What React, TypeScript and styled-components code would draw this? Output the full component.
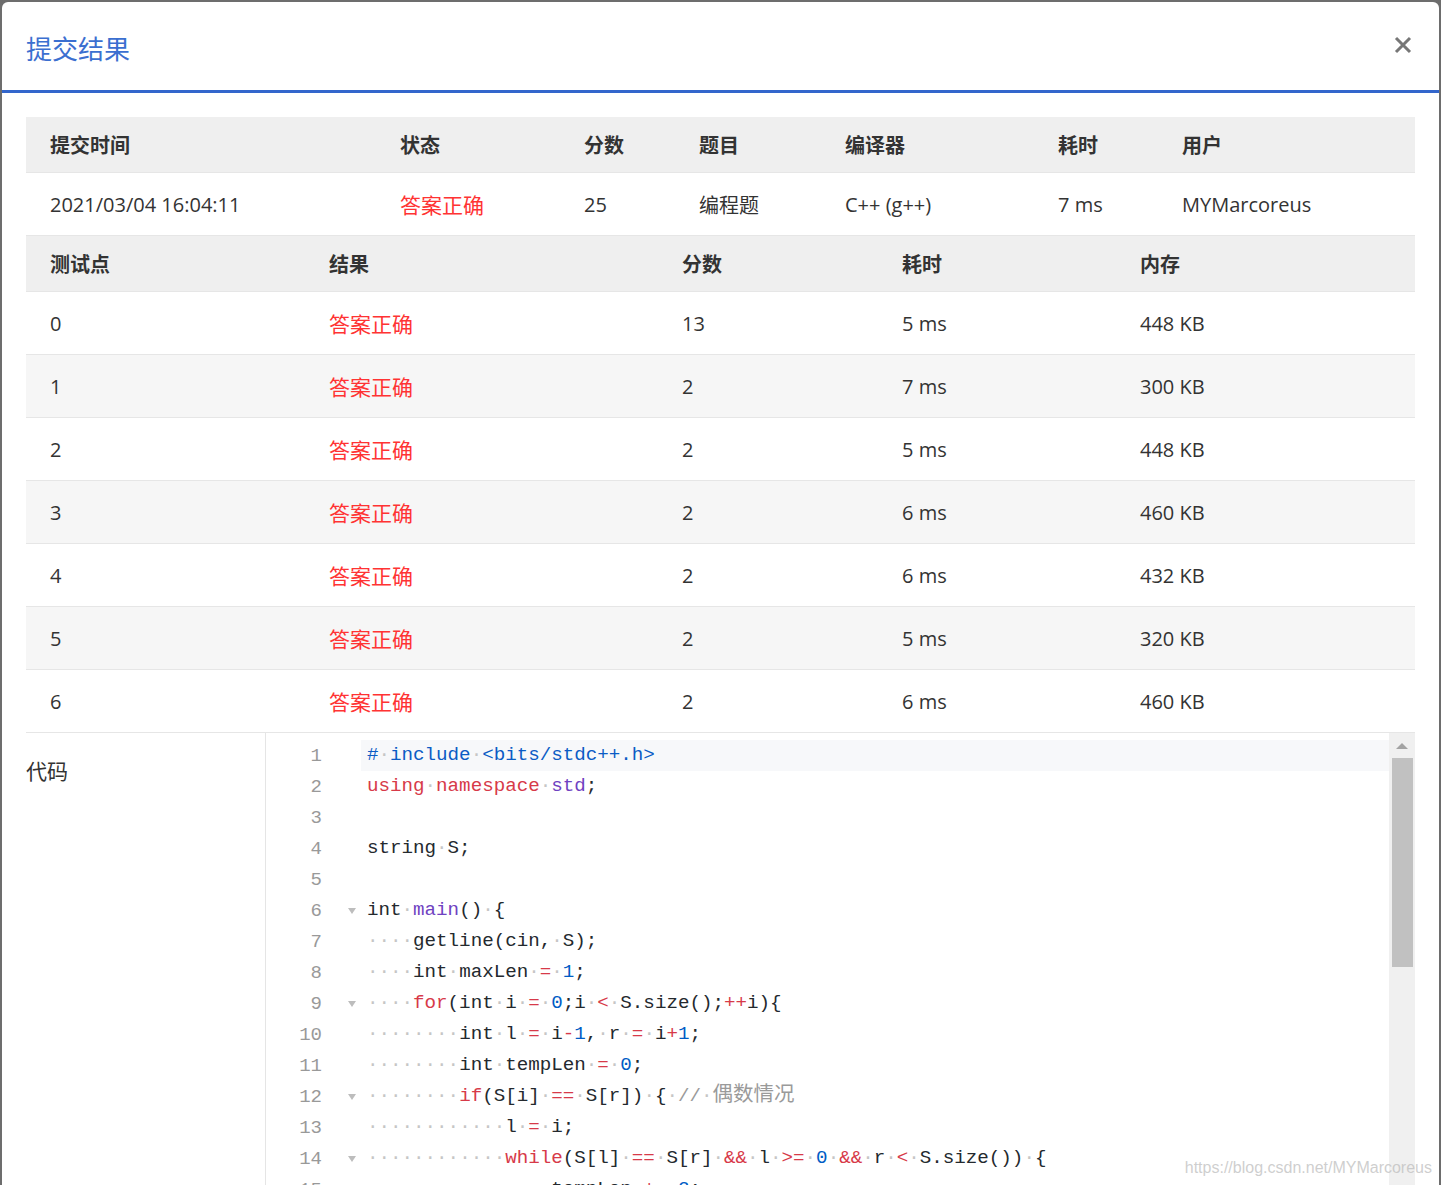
import React from 'react';
import styled, { createGlobalStyle } from 'styled-components';

const GlobalStyle = createGlobalStyle`
  html, body {
    margin: 0;
    padding: 0;
    background: #6d6d6d;
    overflow: hidden;
  }
  body {
    font-family: "Open Sans", "Noto Sans CJK SC", sans-serif;
    color: #333;
  }
`;

const Backdrop = styled.div`
  height: 1185px;
  padding: 2px 2px 0 2px;
  box-sizing: border-box;
`;

const Modal = styled.div`
  position: relative;
  height: 100%;
  background: #fff;
  border-radius: 6px 6px 0 0;
  overflow: hidden;
  display: flex;
  flex-direction: column;
`;

const Header = styled.div`
  flex: none;
  height: 88px;
  padding: 0 24px;
  display: flex;
  align-items: center;
  justify-content: space-between;
  border-bottom: 3px solid #3366cc;
`;

const Title = styled.h2`
  margin: 2px 0 0 0;
  font-family: "Noto Sans CJK SC", sans-serif;
  font-size: 26px;
  font-weight: 400;
  color: #3b6fd0;
`;

const CloseButton = styled.button`
  border: none;
  background: none;
  padding: 0;
  margin: 0 3px 2px 0;
  width: 18px;
  height: 18px;
  cursor: pointer;
  svg {
    display: block;
  }
`;

const Body = styled.div`
  flex: 1;
  padding: 24px 24px 0 24px;
  display: flex;
  flex-direction: column;
  min-height: 0;
`;

const Row = styled.div<{ $cols: string; $head?: boolean; $shade?: boolean }>`
  display: grid;
  grid-template-columns: ${p => p.$cols};
  align-items: center;
  height: ${p => (p.$head ? '55px' : '62px')};
  border-bottom: 1px solid #e6e6e6;
  background: ${p => (p.$head ? '#efefef' : p.$shade ? '#f6f6f6' : '#fff')};
`;

const Cell = styled.div<{ $head?: boolean; $cjk?: boolean; $status?: boolean }>`
  padding-left: 24px;
  white-space: nowrap;
  font-size: ${p => (p.$status ? '21px' : '20px')};
  font-weight: ${p => (p.$head ? 700 : 400)};
  color: ${p => (p.$status ? '#ff3333' : '#333')};
  font-family: ${p =>
    p.$head || p.$cjk || p.$status ? '"Noto Sans CJK SC", sans-serif' : '"Open Sans", "Noto Sans CJK SC", sans-serif'};
`;

const CodeSection = styled.div`
  flex: 1;
  display: flex;
  min-height: 0;
`;

const CodeLabel = styled.div`
  width: 239px;
  flex: none;
  padding-top: 22px;
  font-family: "Noto Sans CJK SC", sans-serif;
  font-size: 21px;
  color: #333;
`;

const Editor = styled.div`
  flex: 1;
  display: flex;
  border-left: 1px solid #e5e5e5;
  min-width: 0;
  overflow: hidden;
`;

const Gutter = styled.div`
  flex: none;
  width: 95px;
  padding-top: 7px;
`;

const GutterLine = styled.div`
  height: 31px;
  display: grid;
  grid-template-columns: 56px 1fr;
  align-items: center;
  font-family: "Liberation Mono", "DejaVu Sans Mono", monospace;
  font-size: 19px;
  color: #999;
`;

const LineNo = styled.span`
  text-align: right;
`;

const Fold = styled.span`
  display: flex;
  justify-content: flex-end;
  padding-right: 5px;
`;

const Lines = styled.div`
  flex: 1;
  padding-top: 7px;
  min-width: 0;
`;

const CodeLine = styled.div<{ $active?: boolean }>`
  height: 31px;
  line-height: 31px;
  padding-left: 6px;
  white-space: pre;
  overflow: hidden;
  font-family: "Liberation Mono", "DejaVu Sans Mono", "Noto Sans CJK SC", monospace;
  font-size: 19.2px;
  color: #24292e;
  background: ${p => (p.$active ? '#f7f8fa' : 'transparent')};
`;

const tokenColors: Record<string, string> = {
  inc: '#0b5cc5',
  kw: '#d73a49',
  ent: '#6f42c1',
  num: '#005cc5',
  cm: '#9a9a9a',
  cmcjk: '#9a9a9a',
  ws: '#c6c6c6',
  plain: '#24292e',
};

const Tok = styled.span<{ $kind: string }>`
  color: ${p => tokenColors[p.$kind]};
  line-height: ${p => (p.$kind === 'cmcjk' ? 1 : 'inherit')};
  font-size: ${p => (p.$kind === 'cmcjk' ? '20.5px' : 'inherit')};
  font-family: ${p => (p.$kind === 'cmcjk' ? '"Noto Sans CJK SC", sans-serif' : 'inherit')};
`;

const ScrollTrack = styled.div`
  flex: none;
  width: 26px;
  background: #f0f0f0;
  display: flex;
  flex-direction: column;
  align-items: center;
  padding-top: 10px;
  box-sizing: border-box;
`;

const ScrollThumb = styled.div`
  width: 21px;
  height: 209px;
  margin-top: 9px;
  background: #c1c1c1;
`;

const Watermark = styled.div`
  position: absolute;
  right: 7px;
  bottom: 8px;
  font-family: "Liberation Sans", Arial, sans-serif;
  font-size: 16px;
  color: rgba(190, 190, 190, 0.75);
  pointer-events: none;
`;

const summaryCols = '350px 184px 115px 146px 213px 124px 1fr';
const caseCols = '279px 353px 220px 238px 1fr';

const cases = [
  ['0', '13', '5 ms', '448 KB'],
  ['1', '2', '7 ms', '300 KB'],
  ['2', '2', '5 ms', '448 KB'],
  ['3', '2', '6 ms', '460 KB'],
  ['4', '2', '6 ms', '432 KB'],
  ['5', '2', '5 ms', '320 KB'],
  ['6', '2', '6 ms', '460 KB'],
];

const source = [
  '#include',
  'using namespace std;',
  '',
  'string S;',
  '',
  'int main() {',
  '    getline(cin, S);',
  '    int maxLen = 1;',
  '    for(int i = 0;i < S.size();++i){',
  '        int l = i-1, r = i+1;',
  '        int tempLen = 0;',
  '        if(S[i] == S[r]) { // 偶数情况',
  '            l = i;',
  '            while(S[l] == S[r] && l >= 0 && r < S.size()) {',
  '                tempLen += 2;',
  '                --l, ++r;',
  '            }',
];

const folds = new Set([6, 9, 12, 14]);

const TOKEN = /(\/\/.*$)|( )|\b(using|namespace|for|if|while|return)\b|\b(std|main)\b|\b(\d+)\b|(==|>=|<=|&&|\+\+|--|\+=|[=<>+\-])/g;

type Piece = [string, string];

function tokenize(line: string): Piece[] {
  if (line === '#include') {
    return [
      ['inc', '#'],
      ['ws', '·'],
      ['inc', 'include'],
      ['ws', '·'],
      ['inc', '<bits/stdc++.h>'],
    ];
  }
  const out: Piece[] = [];
  let last = 0;
  line.replace(TOKEN, (m, cm, sp, kw, ent, num, op, idx: number) => {
    if (idx > last) out.push(['plain', line.slice(last, idx)]);
    if (cm) {
      cm.split(' ').forEach((part: string, i: number) => {
        if (i > 0) out.push(['ws', '·']);
        out.push([/[\u4e00-\u9fff]/.test(part) ? 'cmcjk' : 'cm', part]);
      });
    } else if (sp) out.push(['ws', '·']);
    else if (kw || op) out.push(['kw', m]);
    else if (ent) out.push(['ent', m]);
    else if (num) out.push(['num', m]);
    last = idx + m.length;
    return m;
  });
  if (last < line.length) out.push(['plain', line.slice(last)]);
  return out;
}

const FoldArrow = () => (
  <svg width="8" height="6" viewBox="0 0 8 6">
    <path d="M0 0 L8 0 L4 6 Z" fill="#bdbdbd" />
  </svg>
);

export default function App() {
  return (
    <>
      <GlobalStyle />
      <Backdrop>
        <Modal>
          <Header>
            <Title>提交结果</Title>
            <CloseButton aria-label="close">
              <svg width="18" height="18" viewBox="0 0 18 18">
                <path d="M2 2 L16 16 M16 2 L2 16" stroke="#777" strokeWidth="3" />
              </svg>
            </CloseButton>
          </Header>
          <Body>
            <Row $cols={summaryCols} $head>
              {['提交时间', '状态', '分数', '题目', '编译器', '耗时', '用户'].map(h => (
                <Cell key={h} $head>
                  {h}
                </Cell>
              ))}
            </Row>
            <Row $cols={summaryCols}>
              <Cell>2021/03/04 16:04:11</Cell>
              <Cell $status>答案正确</Cell>
              <Cell>25</Cell>
              <Cell $cjk>编程题</Cell>
              <Cell>C++ (g++)</Cell>
              <Cell>7 ms</Cell>
              <Cell>MYMarcoreus</Cell>
            </Row>
            <Row $cols={caseCols} $head>
              {['测试点', '结果', '分数', '耗时', '内存'].map(h => (
                <Cell key={h} $head>
                  {h}
                </Cell>
              ))}
            </Row>
            {cases.map(([id, score, time, mem], i) => (
              <Row key={id} $cols={caseCols} $shade={i % 2 === 1}>
                <Cell>{id}</Cell>
                <Cell $status>答案正确</Cell>
                <Cell>{score}</Cell>
                <Cell>{time}</Cell>
                <Cell>{mem}</Cell>
              </Row>
            ))}
            <CodeSection>
              <CodeLabel>代码</CodeLabel>
              <Editor>
                <Gutter>
                  {source.map((_, i) => (
                    <GutterLine key={i}>
                      <LineNo>{i + 1}</LineNo>
                      <Fold>{folds.has(i + 1) && <FoldArrow />}</Fold>
                    </GutterLine>
                  ))}
                </Gutter>
                <Lines>
                  {source.map((line, i) => (
                    <CodeLine key={i} $active={i === 0}>
                      {tokenize(line).map(([kind, text], j) => (
                        <Tok key={j} $kind={kind}>
                          {text}
                        </Tok>
                      ))}
                    </CodeLine>
                  ))}
                </Lines>
                <ScrollTrack>
                  <svg width="12" height="6" viewBox="0 0 12 6">
                    <path d="M0 6 L6 0 L12 6 Z" fill="#a3a3a3" />
                  </svg>
                  <ScrollThumb />
                </ScrollTrack>
              </Editor>
            </CodeSection>
          </Body>
          <Watermark>https://blog.csdn.net/MYMarcoreus</Watermark>
        </Modal>
      </Backdrop>
    </>
  );
}
